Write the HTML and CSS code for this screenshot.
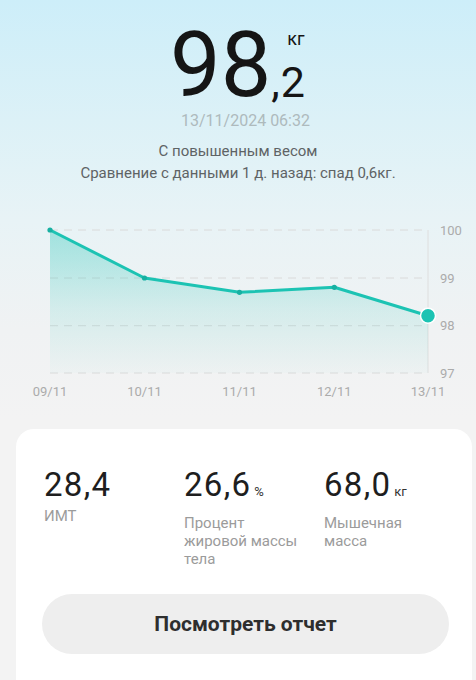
FILE: index.html
```html
<!DOCTYPE html>
<html lang="ru">
<head>
<meta charset="utf-8">
<title>Вес</title>
<link rel="stylesheet" href="styles.css">
</head>
<body>
<div class="page">
  <header class="header">
    <div class="weight">
      <span class="weight-int">98</span>
      <div class="weight-side">
        <span class="weight-unit">кг</span>
        <span class="weight-dec">,2</span>
      </div>
    </div>
    <div class="date">13/11/2024 06:32</div>
    <div class="status">
      <div>С повышенным весом</div>
      <div>Сравнение с данными 1 д. назад: спад 0,6кг.</div>
    </div>
  </header>

  <svg class="chart" width="476" height="210" viewBox="0 0 476 210" xmlns="http://www.w3.org/2000/svg">
    <defs>
      <linearGradient id="area" x1="0" y1="31" x2="0" y2="174" gradientUnits="userSpaceOnUse">
        <stop offset="0" stop-color="#1fc4b5" stop-opacity="0.36"/>
        <stop offset="0.55" stop-color="#1fc4b5" stop-opacity="0.13"/>
        <stop offset="1" stop-color="#1fc4b5" stop-opacity="0.02"/>
      </linearGradient>
    </defs>
    <g stroke="#dadada" stroke-width="1" stroke-dasharray="8 6">
      <line x1="50" y1="31" x2="428" y2="31"/>
      <line x1="50" y1="79" x2="428" y2="79"/>
      <line x1="50" y1="126.7" x2="428" y2="126.7"/>
      <line x1="50" y1="174" x2="428" y2="174"/>
    </g>
    <line x1="428" y1="31" x2="428" y2="174" stroke="#dedede" stroke-width="1"/>
    <path d="M50 31 L144.5 79 L239.5 93.3 L334.3 88.3 L428 116.7 L428 174 L50 174 Z" fill="url(#area)"/>
    <polyline points="50,31 144.5,79 239.5,93.3 334.3,88.3 428,116.7" fill="none" stroke="#1cc3b3" stroke-width="3" stroke-linejoin="round"/>
    <g fill="#17b0a2">
      <circle cx="50" cy="31" r="2.6"/>
      <circle cx="144.5" cy="79" r="2.6"/>
      <circle cx="239.5" cy="93.3" r="2.6"/>
      <circle cx="334.3" cy="88.3" r="2.6"/>
    </g>
    <circle cx="428" cy="116.7" r="7.5" fill="#1cc3b3" stroke="#ffffff" stroke-width="1.5"/>
    <g class="axis-y" font-size="13" fill="#ababab">
      <text x="440" y="31" dominant-baseline="central">100</text>
      <text x="440" y="79" dominant-baseline="central">99</text>
      <text x="440" y="126.7" dominant-baseline="central">98</text>
      <text x="440" y="174" dominant-baseline="central">97</text>
    </g>
    <g class="axis-x" font-size="13" fill="#ababab" text-anchor="middle">
      <text x="50" y="192.7" dominant-baseline="central">09/11</text>
      <text x="144.5" y="192.7" dominant-baseline="central">10/11</text>
      <text x="239.5" y="192.7" dominant-baseline="central">11/11</text>
      <text x="334.3" y="192.7" dominant-baseline="central">12/11</text>
      <text x="428" y="192.7" dominant-baseline="central">13/11</text>
    </g>
  </svg>

  <section class="card">
    <div class="stats">
      <div class="stat">
        <div class="stat-value">28,4</div>
        <div class="stat-label">ИМТ</div>
      </div>
      <div class="stat">
        <div class="stat-value">26,6<span class="stat-unit">%</span></div>
        <div class="stat-label">Процент<br>жировой массы<br>тела</div>
      </div>
      <div class="stat">
        <div class="stat-value">68,0<span class="stat-unit">кг</span></div>
        <div class="stat-label">Мышечная<br>масса</div>
      </div>
    </div>
    <button class="report-btn" type="button">Посмотреть отчет</button>
  </section>
</div>
</body>
</html>
```

FILE: styles.css
```css
* {
  box-sizing: border-box;
}

html, body {
  margin: 0;
  padding: 0;
}

body {
  width: 476px;
  height: 680px;
  overflow: hidden;
  font-family: Roboto, "Noto Sans", "DejaVu Sans", sans-serif;
  background: #f3f3f3;
}

.page {
  width: 476px;
  height: 680px;
  overflow: hidden;
  background: linear-gradient(180deg, #cdeef9 0px, #dcf1f7 120px, #e8f3f6 220px, #f0f2f3 330px, #f3f3f3 420px, #f3f3f3 680px);
}

.header {
  display: flex;
  flex-direction: column;
  align-items: center;
  padding-top: 23px;
}

.weight {
  display: flex;
  align-items: flex-end;
  color: #151515;
}

.weight-int {
  font-size: 90px;
  line-height: 86px;
  font-weight: 400;
}

.weight-side {
  display: flex;
  flex-direction: column;
  align-items: flex-start;
  margin-bottom: 5.6px;
}

.weight-unit {
  font-size: 18px;
  line-height: 18px;
  margin-left: 16px;
  margin-bottom: 13px;
}

.weight-dec {
  font-size: 43px;
  line-height: 42px;
  letter-spacing: 1px;
}

.date {
  margin-top: 2px;
  margin-left: 15px;
  font-size: 16px;
  line-height: 20px;
  color: #aebabd;
}

.status {
  margin-top: 9px;
  text-align: center;
  font-size: 15px;
  line-height: 22px;
  color: #5e6365;
}

.chart {
  display: block;
  margin-top: 15px;
  font-family: Roboto, "Noto Sans", sans-serif;
}

.card {
  margin: 20px 0 0 16px;
  width: 456px;
  height: 280px;
  background: #ffffff;
  border-radius: 18px;
  padding: 37px 23px 0 26px;
}

.stats {
  display: flex;
  padding-left: 2px;
}

.stat {
  width: 140px;
  flex: 0 0 140px;
}

.stat-value {
  font-size: 33px;
  line-height: 38px;
  letter-spacing: 1.3px;
  color: #1e1e1e;
}

.stat-unit {
  font-size: 13px;
  margin-left: 3px;
  letter-spacing: 0;
  color: #333;
}

.stat-label {
  margin-top: 3px;
  font-size: 15px;
  line-height: 18px;
  color: #9b9b9b;
}

.report-btn {
  display: block;
  width: 407px;
  height: 60px;
  margin-top: 26px;
  border: none;
  border-radius: 30px;
  background: #eeeeee;
  font-family: Roboto, "Noto Sans", sans-serif;
  font-size: 21px;
  font-weight: 700;
  color: #2e2e2e;
  padding: 0;
}
```
